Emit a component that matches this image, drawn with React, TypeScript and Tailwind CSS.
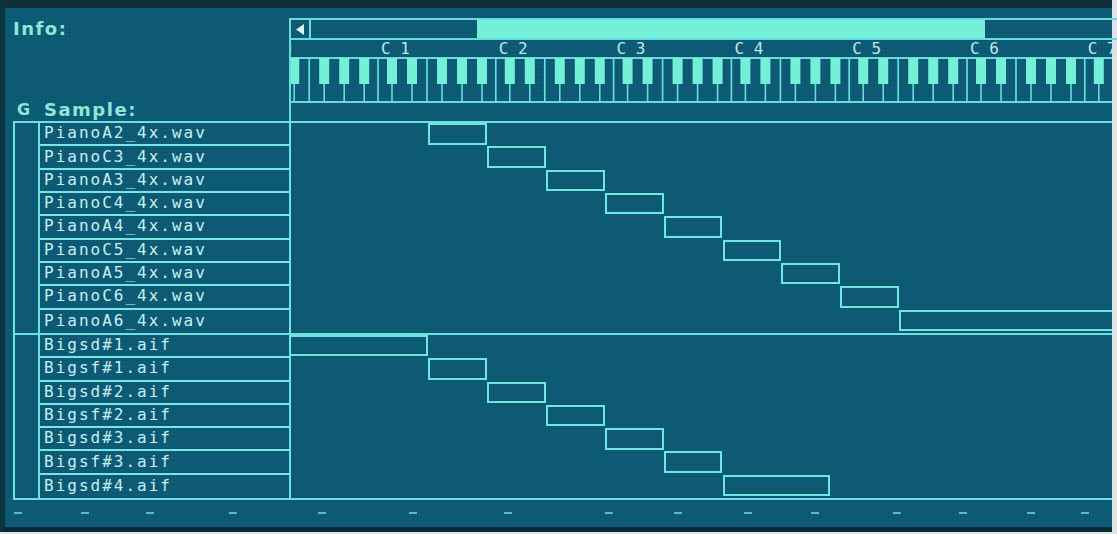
import React from 'react';

const pianoRows = [
  'PianoA2_4x.wav',
  'PianoC3_4x.wav',
  'PianoA3_4x.wav',
  'PianoC4_4x.wav',
  'PianoA4_4x.wav',
  'PianoC5_4x.wav',
  'PianoA5_4x.wav',
  'PianoC6_4x.wav',
  'PianoA6_4x.wav',
];

const bigRows = ['Bigsd#1.aif', 'Bigsf#1.aif', 'Bigsd#2.aif', 'Bigsf#2.aif', 'Bigsd#3.aif', 'Bigsf#3.aif', 'Bigsd#4.aif'];

// zone grid: x measured from the inner edge of the map column (x = 291 on screen)
const ZONE = 58.9;
const ZONE0 = 428 - 291;

type Zone = { left: number; width: number | null };

const pianoZones: Zone[] = pianoRows.map((_, i) => ({
  left: ZONE0 + i * ZONE,
  width: i === pianoRows.length - 1 ? null : ZONE,
}));

const bigZones: Zone[] = [
  { left: -2, width: ZONE0 + 2 },
  ...[0, 1, 2, 3, 4].map((i) => ({ left: ZONE0 + i * ZONE, width: ZONE })),
  { left: ZONE0 + 5 * ZONE, width: 107.5 },
];

const OCTAVE = 117.8;
const C1 = 87;
const BLACKS = [14, 34, 64, 84, 104];

const dashes = [18, 85, 150, 233, 322, 413, 508, 609, 678, 748, 815, 897, 963, 1031, 1085];

const Keyboard = () => {
  const octaves = [0, 1, 2, 3, 4, 5, 6, 7];
  return (
    <svg width="821" height="46" viewBox="0 0 821 46" className="block">
      <line x1="0" y1="1" x2="821" y2="1" stroke="#66dcdc" strokeWidth="2" />
      <line x1="0" y1="45" x2="821" y2="45" stroke="#66dcdc" strokeWidth="2" />
      {octaves.map((n) => {
        const c = C1 + (n - 1) * OCTAVE;
        return (
          <g key={n}>
            <line x1={c} y1="1" x2={c} y2="45" stroke="#66dcdc" strokeWidth="1.7" />
            <line x1={c + 49} y1="1" x2={c + 49} y2="45" stroke="#66dcdc" strokeWidth="1.7" />
            {BLACKS.map((b) => (
              <g key={b}>
                <rect x={c + b - 5} y="1" width="10" height="26" fill="#74f0d8" />
                <line x1={c + b} y1="26" x2={c + b} y2="45" stroke="#66dcdc" strokeWidth="1.6" />
              </g>
            ))}
          </g>
        );
      })}
    </svg>
  );
};

const Group = ({ names, zones, rowH }: { names: string[]; zones: Zone[]; rowH: string }) => (
  <div className="flex">
    <div className="w-[27px] shrink-0 border-l-2 border-r-2 border-[#6ee2e0]" />
    <div className="w-[249px] shrink-0 flex flex-col">
      {names.map((n, i) => (
        <div
          key={n}
          className={`${rowH} flex items-center pl-[4px] pb-[1px] text-[16px] tracking-[2px] text-[#c6f0f0] whitespace-pre ${
            i < names.length - 1 ? 'border-b-2 border-[#78e6e4]' : ''
          }`}
          style={{ fontFamily: '"DejaVu Sans Mono", "Liberation Mono", monospace' }}
        >
          {n}
        </div>
      ))}
    </div>
    <div className="flex-1 flex flex-col border-l-2 border-[#6ee2e0]">
      {zones.map((z, i) => (
        <div key={i} className={`${rowH} flex items-start`}>
          <div
            className={`h-[21.5px] border-2 border-[#6fe6e0] ${z.width === null ? 'flex-1 border-r-0' : 'shrink-0'}`}
            style={{ marginLeft: z.left, width: z.width ?? undefined }}
          />
        </div>
      ))}
    </div>
  </div>
);

export default function App() {
  return (
    <div className="w-[1117px] h-[534px] bg-[#dfe5e6] overflow-hidden">
      <div
        className="w-[1112px] h-[532px] flex flex-col border-t-[8px] border-t-[#122f38] border-l-[5px] border-l-[#0b3442] border-b-[5px] border-b-[#0b2a33] bg-[#0e5d78] bg-[linear-gradient(90deg,rgba(0,25,35,0.09)_1px,transparent_1px),linear-gradient(rgba(0,25,35,0.09)_1px,transparent_1px)] bg-[size:4px_4px]"
        style={{ fontFamily: '"DejaVu Sans", "Liberation Sans", sans-serif' }}
      >
        {/* header */}
        <div className="flex h-[113px] shrink-0">
          <div className="w-[284px] shrink-0 flex flex-col justify-between pl-[8px] pt-[12px] pb-[2px] text-[#8ee6d8] font-bold">
            <div className="text-[18px] leading-[18px] tracking-[1.5px]">Info:</div>
            <div className="flex items-end leading-[18px]">
              <span className="text-[16px] ml-[4px] w-[27px]">G</span>
              <span className="text-[18px] tracking-[1.5px]">Sample:</span>
            </div>
          </div>
          <div className="flex-1 pt-[10px] flex flex-col">
            <div className="flex-1 flex flex-col border-l-2 border-t-2 border-[#66dcdc]">
              {/* scrollbar */}
              <div className="h-[20px] shrink-0 flex border-b-2 border-[#66dcdc]">
                <div className="w-[20px] shrink-0 border-r-2 border-[#66dcdc] flex items-center justify-center">
                  <svg width="8" height="11" viewBox="0 0 8 11">
                    <path d="M8 0 L0 5.5 L8 11 Z" fill="#d8f6f0" />
                  </svg>
                </div>
                <div className="flex-1 flex">
                  <div className="h-full w-[508px] ml-[166px] bg-[#74f0d8]" />
                </div>
                <div className="w-[18px] shrink-0 border-l-2 border-[#66dcdc] flex items-center justify-center">
                  <svg width="8" height="11" viewBox="0 0 8 11">
                    <path d="M0 0 L8 5.5 L0 11 Z" fill="#d8f6f0" />
                  </svg>
                </div>
              </div>
              {/* note labels */}
              <div
                className="h-[17px] shrink-0 flex overflow-hidden text-[16px] leading-[17px] text-[#bde8ec]"
                style={{ fontFamily: '"DejaVu Sans Mono", "Liberation Mono", monospace' }}
              >
                {[0, 1, 2, 3, 4, 5, 6, 7].map((n) => (
                  <div key={n} className={`w-[117.8px] shrink-0 whitespace-pre ${n === 0 ? '-ml-[27.8px]' : ''}`}>
                    {`C ${n}`}
                  </div>
                ))}
              </div>
              <Keyboard />
              <div className="flex-1" />
            </div>
          </div>
        </div>

        {/* sample map */}
        <div className="ml-[8px] shrink-0 flex flex-col border-t-2 border-b-2 border-[#6ee2e0]">
          <Group names={pianoRows} zones={pianoZones} rowH="h-[23.33px]" />
          <div className="border-t-2 border-[#6ee2e0]">
            <Group names={bigRows} zones={bigZones} rowH="h-[23.29px]" />
          </div>
        </div>

        {/* footer marks */}
        <div className="flex-1 flex items-center pb-[1px]">
          {dashes.map((x, i) => (
            <div
              key={x}
              className="w-[8px] h-[2.5px] shrink-0 bg-[#5fb9cc]"
              style={{ marginLeft: i === 0 ? x - 5 - 4 : x - dashes[i - 1] - 8 }}
            />
          ))}
        </div>
      </div>
    </div>
  );
}
